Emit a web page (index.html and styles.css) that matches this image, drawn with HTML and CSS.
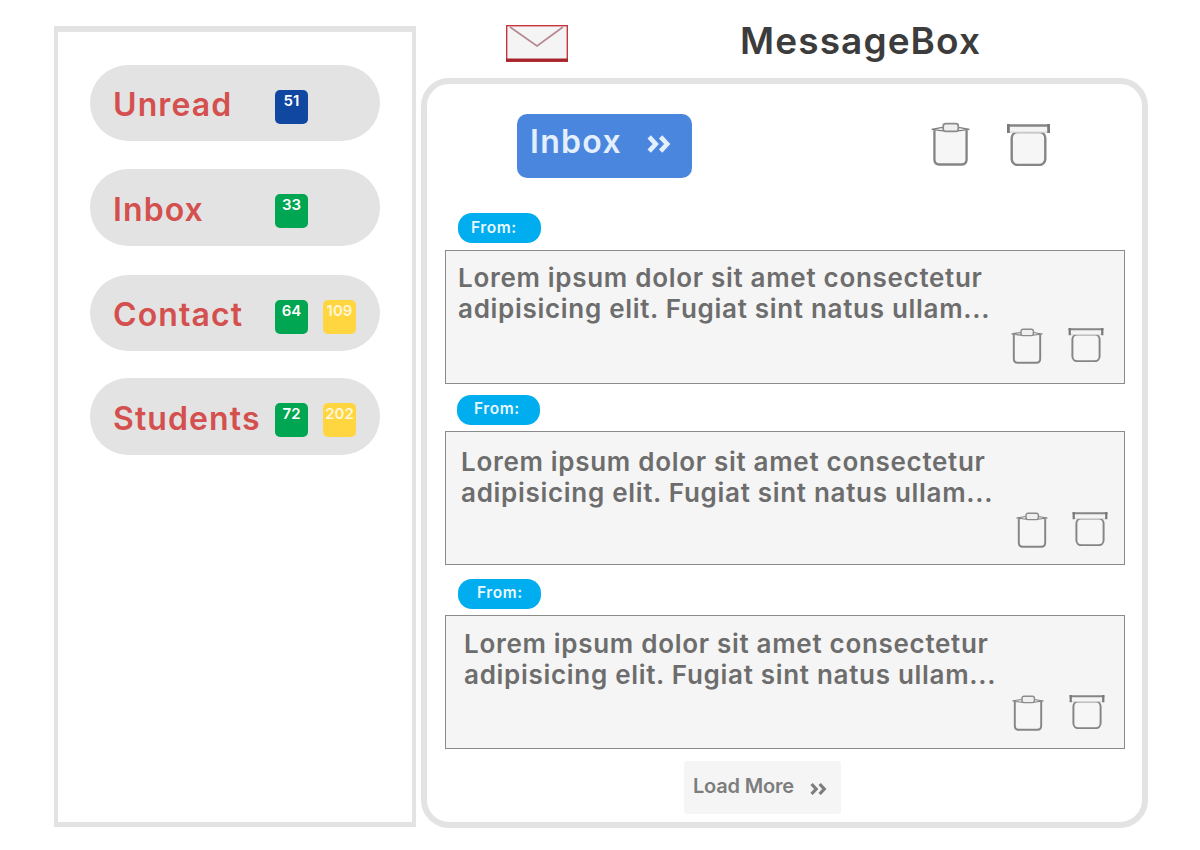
FILE: index.html
```html
<!DOCTYPE html>
<html lang="en">
<head>
<meta charset="utf-8">
<title>MessageBox</title>
<link rel="stylesheet" href="styles.css">
</head>
<body>
<svg class="defs" width="0" height="0" aria-hidden="true">
  <symbol id="trash" viewBox="0 0 40 44">
    <path d="M3.5 8 V38 Q3.5 43 8.5 43 H31.5 Q36.5 43 36.5 38 V8" fill="#f6f6f6" stroke="#858585" stroke-width="2.4"/>
    <path d="M0.7 7 Q20 2.5 39.3 7 Q20 10.5 0.7 7 Z" fill="#fafafa" stroke="#7d7d7d" stroke-width="1.4"/>
    <rect x="12.5" y="1" width="15.5" height="8" rx="2.5" fill="#f0f0f0" stroke="#8c8c8c" stroke-width="1.8"/>
  </symbol>
  <symbol id="box" viewBox="0 0 43 42">
    <rect x="4.7" y="8" width="33.6" height="33" rx="6" fill="#f6f6f6" stroke="#858585" stroke-width="2.4"/>
    <rect x="1" y="1" width="41" height="7.5" fill="#f4f4f4"/>
    <path d="M0 1.5 H43" stroke="#858585" stroke-width="2.4"/>
    <path d="M1.4 0 V9 M41.6 0 V9" stroke="#7a7a7a" stroke-width="2.8"/>
    <path d="M3 8.2 H40" stroke="#cfcfcf" stroke-width="1"/>
  </symbol>
  <symbol id="chev" viewBox="0 0 22 18">
    <path d="M2 2.5 L8 9 L2 15.5 M12.5 2.5 L18.5 9 L12.5 15.5" fill="none" stroke="currentColor" stroke-width="4.2"/>
  </symbol>
</svg>
<div class="page">
  <aside class="sidebar">
    <div class="pill pill-a"><span class="pill-name">Unread</span><div class="badges"><span class="badge navy">51</span></div></div>
    <div class="pill pill-b"><span class="pill-name">Inbox</span><div class="badges"><span class="badge green">33</span></div></div>
    <div class="pill pill-c"><span class="pill-name">Contact</span><div class="badges"><span class="badge green">64</span><span class="badge yellow">109</span></div></div>
    <div class="pill pill-d"><span class="pill-name">Students</span><div class="badges"><span class="badge green">72</span><span class="badge yellow">202</span></div></div>
  </aside>
  <div class="content">
    <header class="head">
      <svg class="envelope" viewBox="0 0 62 37" aria-hidden="true">
        <rect x="0.7" y="0.7" width="60.6" height="35.6" fill="#f4f4f4" stroke="#c9353e" stroke-width="1.4"/>
        <path d="M0 35 H62" stroke="#a5262c" stroke-width="3"/>
        <path d="M4 2 L31 21 L57 2" fill="none" stroke="#b58790" stroke-width="1.6"/>
      </svg>
      <h1 class="title">MessageBox</h1>
    </header>
    <main class="panel">
      <div class="toolbar">
        <div class="inbox-btn"><span>Inbox</span><svg class="chev-lg"><use href="#chev"/></svg></div>
        <div class="tools">
          <svg class="ico-trash-lg"><use href="#trash"/></svg>
          <svg class="ico-box-lg"><use href="#box"/></svg>
        </div>
      </div>

      <section class="msg">
        <span class="from">From:</span>
        <div class="box">
          <p class="text">Lorem ipsum dolor sit amet consectetur<br>adipisicing elit. Fugiat sint natus ullam...</p>
          <div class="actions">
            <svg class="ico-trash"><use href="#trash"/></svg>
            <svg class="ico-box"><use href="#box"/></svg>
          </div>
        </div>
      </section>

      <section class="msg msg-2">
        <span class="from">From:</span>
        <div class="box">
          <p class="text">Lorem ipsum dolor sit amet consectetur<br>adipisicing elit. Fugiat sint natus ullam...</p>
          <div class="actions">
            <svg class="ico-trash"><use href="#trash"/></svg>
            <svg class="ico-box"><use href="#box"/></svg>
          </div>
        </div>
      </section>

      <section class="msg msg-3">
        <span class="from">From:</span>
        <div class="box">
          <p class="text">Lorem ipsum dolor sit amet consectetur<br>adipisicing elit. Fugiat sint natus ullam...</p>
          <div class="actions">
            <svg class="ico-trash"><use href="#trash"/></svg>
            <svg class="ico-box"><use href="#box"/></svg>
          </div>
        </div>
      </section>

      <div class="more"><span>Load More</span><svg class="chev-sm"><use href="#chev"/></svg></div>
    </main>
  </div>
</div>
</body>
</html>
```
FILE: styles.css
```css
* { box-sizing: border-box; }
html, body { margin: 0; height: 850px; background: #fff; overflow: hidden; }
body { font-family: Inter, "Liberation Sans", sans-serif; }
.defs { position: absolute; }
.page { display: flex; gap: 5px; padding: 26px 0 0 54px; align-items: flex-start; }

.sidebar {
  width: 362px; height: 801px;
  border: 4px solid #e3e3e3; border-top-width: 6px; border-bottom-width: 5px;
  padding: 33px 32px 0;
}
.pill {
  display: flex; align-items: center;
  height: 76px; border-radius: 38px; background: #e3e3e3;
  padding-left: 23px;
}
.pill-a { margin-bottom: 28px; }
.pill-b { height: 77px; margin-bottom: 29px; }
.pill-c { margin-bottom: 27px; }
.pill-d { height: 77px; }
.pill-name {
  width: 162px; margin-top: 3px; color: #d4504f;
  font-size: 32px; font-weight: 600; letter-spacing: 1.1px;
  white-space: nowrap;
}
.badges { display: flex; gap: 15px; margin-top: 7px; }
.badge {
  width: 33px; height: 34px; border-radius: 5px;
  color: #fff; font-size: 15px; font-weight: 600; line-height: 21px;
  white-space: nowrap;
  display: flex; justify-content: center;
}
.navy { background: #0f47a1; }
.green { background: #00a651; }
.yellow { background: #ffd640; color: #fff6d8; }

.content { width: 727px; }
.head { height: 52px; display: flex; align-items: flex-start; }
.envelope { width: 62px; height: 37px; margin: -1px 0 0 85px; }
.title {
  margin: -6px 0 0 172px; color: #3c3c3c;
  font-size: 37px; font-weight: 600; line-height: 42px; letter-spacing: 1.1px;
}
.panel {
  height: 750px;
  border: 6px solid #e3e3e3; border-radius: 28px;
  padding: 30px 0 0 18px;
}
.toolbar { display: flex; align-items: flex-start; height: 99px; }
.inbox-btn {
  width: 175px; height: 64px; margin-left: 72px; padding-left: 13px;
  background: #4a86de; border-radius: 10px;
  display: flex; align-items: center;
  color: #e3effc; font-size: 32px; font-weight: 600; letter-spacing: 1.3px;
}
.inbox-btn span { width: 117px; margin-top: -10px; }
.chev-lg { width: 24px; height: 20px; margin-top: -5px; }
.tools { display: flex; gap: 37px; margin: 8px 0 0 239px; }
.ico-trash-lg { width: 39px; height: 44px; }
.ico-box-lg { width: 43px; height: 42px; margin-top: 2px; }

.msg { width: 680px; display: flex; flex-direction: column; }
.from {
  width: 83px; height: 30px; margin: 0 0 7px 13px;
  background: #00aeef; border-radius: 14px;
  color: #eaf8ff; font-size: 15.5px; font-weight: 600; line-height: 29px; letter-spacing: 0.6px;
  padding-left: 13px;
}
.box {
  height: 134px;
  border: 1.5px solid #8b8b8b; background: #f5f5f5;
  padding: 11px 0 0 12px;
  display: flex; flex-direction: column;
}
.text {
  margin: 0; height: 63px;
  color: #6d6d6d; font-size: 26px; font-weight: 600; line-height: 31px; letter-spacing: 0.7px; white-space: nowrap;
}
.actions { display: flex; gap: 25px; margin: 3px 0 0 553px; align-items: flex-start; }
.ico-trash { width: 32px; height: 36px; }
.ico-box { width: 36px; height: 34px; }

.msg-2 { margin-top: 11px; }
.msg-2 .from { margin-bottom: 6px; margin-left: 12px; padding-left: 17px; line-height: 27px; }
.msg-2 .box { padding: 14px 0 0 15px; }
.msg-2 .text { height: 62px; }
.msg-2 .actions { margin: 4px 0 0 555px; gap: 24px; }
.msg-3 { margin-top: 14px; }
.msg-3 .from { margin-bottom: 6px; padding-left: 19px; line-height: 27px; }
.msg-3 .box { padding: 12px 0 0 18px; }
.msg-3 .actions { margin: 4px 0 0 548px; }

.more {
  width: 157px; height: 53px; margin: 12px 0 0 239px;
  background: #f5f5f5; border-radius: 3px; padding-left: 9px;
  display: flex; align-items: center; color: #7d7d7d;
  font-size: 20px; font-weight: 600; letter-spacing: -0.2px;
}
.more span { width: 117px; margin-top: -4px; }
.chev-sm { width: 17px; height: 14px; margin-top: 3px; }
```
